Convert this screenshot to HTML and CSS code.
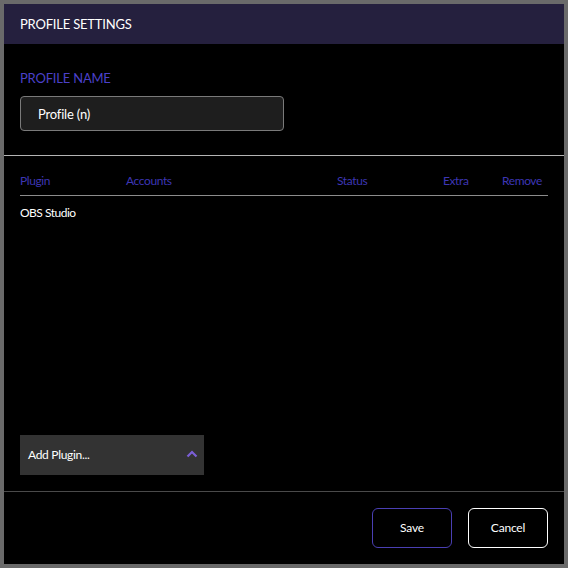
FILE: index.html
```html
<!DOCTYPE html>
<html>
<head>
<meta charset="utf-8">
<link rel="stylesheet" href="styles.css">
</head>
<body>
<div class="dialog">
  <div class="header">PROFILE SETTINGS</div>
  <div class="name-section">
    <div class="label">PROFILE NAME</div>
    <div class="input">Profile (n)</div>
  </div>
  <div class="plugins">
    <div class="thead">
      <span class="c-plugin">Plugin</span>
      <span class="c-accounts">Accounts</span>
      <span class="c-status">Status</span>
      <span class="c-extra">Extra</span>
      <span class="c-remove">Remove</span>
    </div>
    <div class="row">
      <span class="c-plugin">OBS Studio</span>
    </div>
    <div class="spacer"></div>
    <div class="add">
      <span>Add Plugin...</span>
      <svg class="chev" width="12" height="8" viewBox="0 0 12 8"><path d="M1.5 6.5 L6 2 L10.5 6.5" fill="none" stroke="#7b5fd6" stroke-width="2.2"/></svg>
    </div>
  </div>
  <div class="footer">
    <div class="btn save">Save</div>
    <div class="btn cancel">Cancel</div>
  </div>
</div>
</body>
</html>
```

FILE: styles.css
```css
html, body {
  margin: 0;
  padding: 0;
}
body {
  background: #6a6a6a;
  padding: 4px;
  font-family: Lato, "Liberation Sans", sans-serif;
  color: #fff;
}
.dialog {
  width: 560px;
  height: 560px;
  background: #000;
  display: flex;
  flex-direction: column;
}
.header {
  height: 40px;
  flex: none;
  background: #25203e;
  display: flex;
  align-items: center;
  padding: 0 16px;
  font-size: 13px;
  letter-spacing: -0.2px;
}
.name-section {
  height: 111px;
  flex: none;
  padding: 0 16px;
  border-bottom: 1px solid #b4b4b4;
}
.label {
  margin-top: 26px;
  height: 16px;
  line-height: 16px;
  font-size: 13px;
  letter-spacing: -0.2px;
  color: #4b40c9;
}
.input {
  margin-top: 10px;
  height: 33px;
  border: 1px solid #7a7a7a;
  border-radius: 4px;
  background: #1e1e1e;
  display: flex;
  align-items: center;
  padding-left: 17px;
  width: 245px;
  font-size: 13px;
  letter-spacing: -0.2px;
}
.plugins {
  flex: 1;
  display: flex;
  flex-direction: column;
  padding: 0 16px 16px;
  border-bottom: 1px solid #4a4a4a;
}
.thead, .row {
  display: flex;
  font-size: 12px;
  letter-spacing: -0.4px;
}
.thead {
  height: 40px;
  align-items: flex-end;
  padding-bottom: 7px;
  box-sizing: border-box;
  border-bottom: 1px solid #8c8c8c;
  color: #3d36b4;
}
.row {
  height: 32px;
  align-items: center;
  letter-spacing: -0.5px;
}
.c-plugin { width: 106px; }
.c-accounts { width: 211px; }
.c-status { width: 106px; }
.c-extra { width: 59px; }
.spacer { flex: 1; }
.add {
  width: 184px;
  height: 40px;
  background: #333;
  display: flex;
  align-items: center;
  justify-content: space-between;
  padding: 0 6px 1px 8px;
  box-sizing: border-box;
  font-size: 12px;
  letter-spacing: -0.3px;
}
.chev { margin-top: -2px; }
.footer {
  height: 72px;
  flex: none;
  display: flex;
  justify-content: flex-end;
  align-items: center;
  gap: 16px;
  padding: 0 16px;
}
.btn {
  width: 78px;
  border-radius: 6px;
  display: flex;
  align-items: center;
  justify-content: center;
  font-size: 12px;
  letter-spacing: -0.2px;
  padding-bottom: 1px;
  box-sizing: content-box;
  height: 37px;
}
.save { border: 1px solid #4a3fb3; }
.cancel { border: 1px solid #fff; }
```
